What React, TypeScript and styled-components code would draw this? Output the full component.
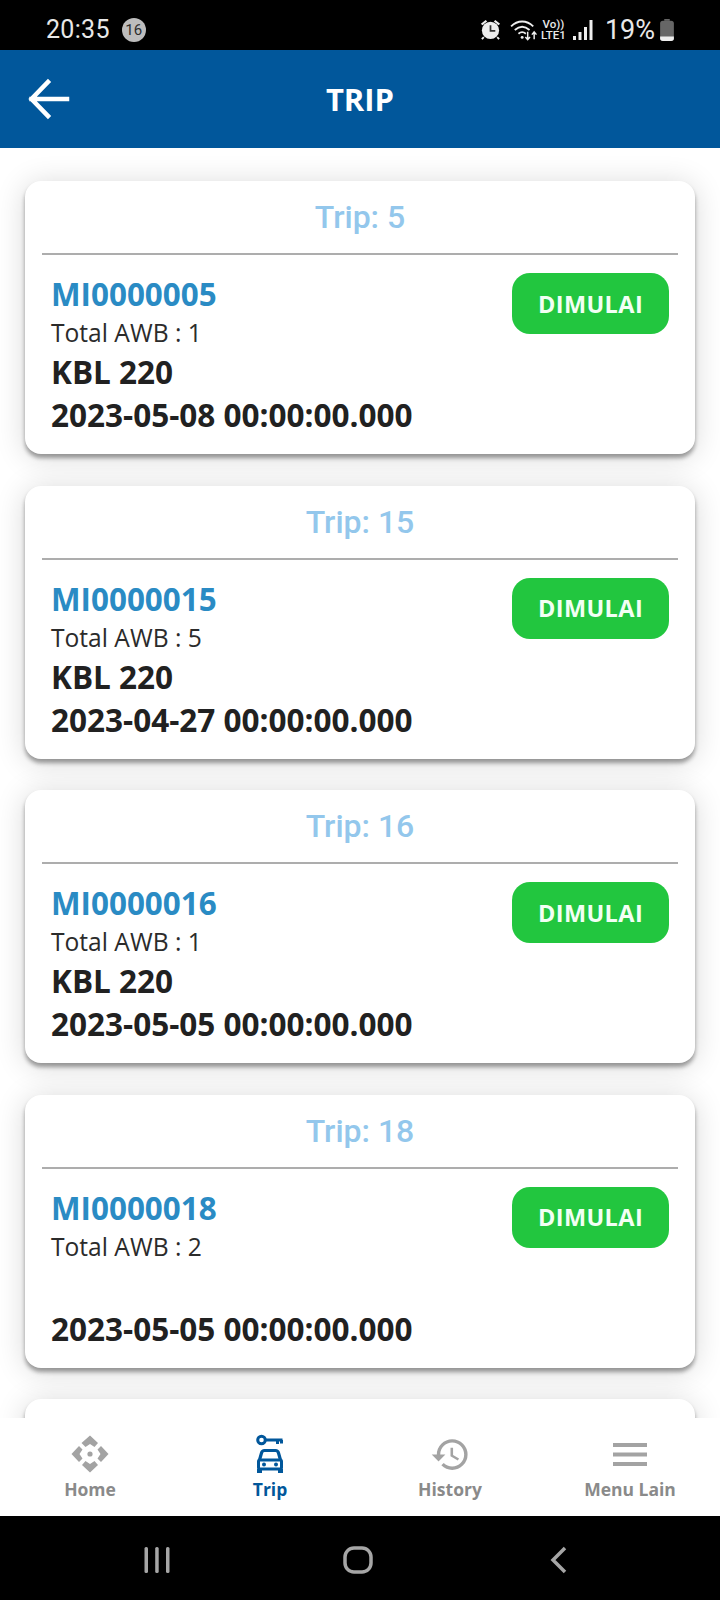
import React from 'react';
import styled, { createGlobalStyle } from 'styled-components';
import { MdHistory } from 'react-icons/md';

type Trip = {
    trip: number,
    code: string,
    awb: number,
    vehicle: string,
    date: string,
}

const trips: Trip[] = [
    { trip: 5, code: 'MI0000005', awb: 1, vehicle: 'KBL 220', date: '2023-05-08 00:00:00.000' },
    { trip: 15, code: 'MI0000015', awb: 5, vehicle: 'KBL 220', date: '2023-04-27 00:00:00.000' },
    { trip: 16, code: 'MI0000016', awb: 1, vehicle: 'KBL 220', date: '2023-05-05 00:00:00.000' },
    { trip: 18, code: 'MI0000018', awb: 2, vehicle: '', date: '2023-05-05 00:00:00.000' },
];

const GlobalStyle = createGlobalStyle`
  html, body {
    margin: 0;
    padding: 0;
    background: #fff;
  }
`

const Screen = styled.div`
  width: 720px;
  height: 1600px;
  display: flex;
  flex-direction: column;
  overflow: hidden;
  font-family: "Open Sans", "Liberation Sans", sans-serif;
  background: #fff;
`

const StatusBar = styled.div`
  height: 50px;
  flex: none;
  box-sizing: border-box;
  background: #000;
  color: #e8e8e8;
  display: flex;
  align-items: center;
  justify-content: space-between;
  padding: 9px 46px 0 46px;
`

const StatusGroup = styled.div`
  display: flex;
  align-items: center;
`

const Clock = styled.span`
  font-family: Roboto, sans-serif;
  font-size: 25px;
  letter-spacing: 0.3px;
`

const Badge = styled.span`
  width: 24px;
  height: 24px;
  margin-left: 12px;
  border-radius: 50%;
  background: #bdbdbd;
  color: #2e2e2e;
  font-family: Roboto, sans-serif;
  font-size: 15px;
  display: flex;
  align-items: center;
  justify-content: center;
`

const Percent = styled.span`
  font-family: Roboto, sans-serif;
  font-size: 27px;
  margin: 0 5px 0 12px;
`

const Volte = styled.span`
  font-family: Roboto, sans-serif;
  font-size: 11.5px;
  font-weight: 500;
  line-height: 11px;
  text-align: center;
  margin: 0 7px 0 3px;
  display: flex;
  flex-direction: column;
`

const AlarmWrap = styled.span`
  display: flex;
  margin-right: 8px;
`

const Header = styled.header`
  height: 98px;
  flex: none;
  background: #01579b;
  display: flex;
  align-items: center;
  justify-content: center;
  position: relative;
`

const BackIcon = styled.svg`
  position: absolute;
  left: 28px;
  top: 28px;
`

const HeaderTitle = styled.h1`
  margin: 0;
  color: #fff;
  font-size: 31px;
  font-weight: 700;
`

const List = styled.main`
  flex: 1;
  min-height: 0;
  overflow: hidden;
  display: flex;
  flex-direction: column;
  gap: 31.5px;
  padding: 33px 25px 0;
  background: #fff;
`

const Card = styled.section`
  flex: none;
  height: 273px;
  box-sizing: border-box;
  padding: 0 17px;
  background: #fff;
  border-radius: 16px;
  box-shadow: 0 4px 4px rgba(0, 0, 0, 0.36), 0 3px 30px rgba(0, 0, 0, 0.16);
`

const CardTitle = styled.div`
  height: 72px;
  border-bottom: 2px solid #adadad;
  display: flex;
  align-items: center;
  justify-content: center;
  font-family: Roboto, sans-serif;
  font-size: 32px;
  font-weight: 500;
  color: #93c7ec;
`

const CardBody = styled.div`
  display: flex;
  justify-content: space-between;
  align-items: flex-start;
  padding: 18px 9px 0 9px;
`

const Info = styled.div`
  display: flex;
  flex-direction: column;
`

const Code = styled.div`
  font-size: 31.4px;
  line-height: 42px;
  font-weight: 700;
  color: #2a8bc4;
`

const Awb = styled.div`
  font-size: 24.6px;
  line-height: 35px;
  color: #2b2b2b;
`

const Strong = styled.div`
  font-size: 31.5px;
  line-height: 43px;
  min-height: 43px;
  font-weight: 700;
  color: #212121;
`

const StartButton = styled.button`
  width: 157px;
  height: 61px;
  border: 0;
  border-radius: 18px;
  background: #22c63f;
  color: #f2fff4;
  font-family: "Open Sans", sans-serif;
  font-size: 23.5px;
  font-weight: 700;
  letter-spacing: 0.4px;
`

const BottomNav = styled.nav`
  height: 98px;
  flex: none;
  position: relative;
  background: #fff;
  display: grid;
  grid-template-columns: repeat(4, 1fr);
`

const NavItem = styled.div<{ $active?: boolean }>`
  display: flex;
  flex-direction: column;
  align-items: center;
  padding-top: 16px;
  box-sizing: border-box;
  color: ${(p) => (p.$active ? '#01579b' : '#8a8a8a')};
  font-size: 17.5px;
  line-height: 26px;
  font-weight: 700;
`

const NavIconBox = styled.div<{ $active?: boolean }>`
  height: 40px;
  margin-bottom: 2px;
  display: flex;
  align-items: center;
  justify-content: center;
  color: ${(p) => (p.$active ? '#01579b' : '#a3a3a3')};
`

const SystemBar = styled.div`
  height: 84px;
  flex: none;
  box-sizing: border-box;
  background: #000;
  display: grid;
  grid-template-columns: repeat(3, 201px);
  padding: 4px 0 0 56px;
  align-items: center;
  justify-items: center;
`

const AlarmIcon = () => (
    <svg width="23" height="23" viewBox="0 0 24 24" fill="#eee">
        <circle cx="12" cy="13" r="9" />
        <path d="M2 6l5-4 1.5 1.6-5 4zM22 6l-5-4-1.5 1.6 5 4z" />
        <path d="M12 7.5v6h5" fill="none" stroke="#333" strokeWidth="1.8" />
        <path d="M5 20l-2 2M19 20l2 2" stroke="#eee" strokeWidth="2" />
    </svg>
);

const WifiIcon = () => (
    <svg width="28" height="24" viewBox="0 0 30 26" fill="none" stroke="#eee" strokeWidth="2">
        <path d="M1 9c7-7 17-7 24 0" />
        <path d="M5 13c5-4.5 11-4.5 16 0" />
        <path d="M9 17c3-2.5 5-2.5 8 0" />
        <circle cx="13" cy="21" r="1.6" fill="#eee" stroke="none" />
        <path d="M19 15v8M16.5 20.5l2.5 3 2.5-3M26 23v-8M23.5 18l2.5-3 2.5 3" strokeWidth="1.6" />
    </svg>
);

const SignalIcon = () => (
    <svg width="20" height="22" viewBox="0 0 20 22" fill="#eee">
        <rect x="0" y="17" width="3" height="4" />
        <rect x="5.5" y="13" width="3" height="8" />
        <rect x="11" y="8" width="3" height="13" />
        <rect x="16.5" y="1" width="3" height="20" />
    </svg>
);

const BatteryIcon = () => (
    <svg width="14" height="22" viewBox="0 0 15 24">
        <path d="M4.5 0h6v2h-6z" fill="#666" />
        <rect x="0" y="2" width="15" height="22" rx="3" fill="#666" />
        <path d="M0 19h15v2a3 3 0 0 1-3 3H3a3 3 0 0 1-3-3z" fill="#eee" />
    </svg>
);

const HomeIcon = () => (
    <svg width="38" height="38" viewBox="0 0 38 38" fill="currentColor">
        <path d="M19 0.5l8 7.5-3.5 4-4.500-3-4.500 3L10.500 8z" />
        <path d="M19 37.5l8-7.5-3.500-4-4.500 3-4.500-3-3.500 4z" />
        <path d="M0.500 19l7.500-8 3.500 3.500-3 4.500 3 4.500L8 27z" />
        <path d="M37.500 19l-7.500-8-3.500 3.500 3 4.500-3 4.500 3.500 3.500z" />
        <circle cx="19" cy="19" r="2.600" />
    </svg>
);

const TripIcon = () => (
    <svg width="28" height="40" viewBox="0 0 28 40" fill="none" stroke="currentColor">
        <circle cx="5.500" cy="6" r="3.800" strokeWidth="3" />
        <path d="M9 6h17.500M21.500 6v4M25.500 6v3.500" strokeWidth="3" />
        <path d="M3.500 26l2-7c.4-1.500 1.500-2.500 3-2.500h11c1.500 0 2.600 1 3 2.500l2 7" strokeWidth="3.200" />
        <rect x="2.500" y="26" width="23" height="9" rx="1.500" strokeWidth="3" />
        <path d="M1 35h5v4H1zM22 35h5v4h-5z" fill="currentColor" stroke="none" />
        <circle cx="8" cy="30.500" r="2" fill="currentColor" stroke="none" />
        <circle cx="20" cy="30.500" r="2" fill="currentColor" stroke="none" />
    </svg>
);

const MenuIcon = () => (
    <svg width="34" height="23" viewBox="0 0 34 23" fill="currentColor">
        <rect y="0" width="34" height="4" />
        <rect y="9.500" width="34" height="4" />
        <rect y="19" width="34" height="4" />
    </svg>
);

const App: React.FC = () => {
    return (
        <Screen>
            <GlobalStyle />
            <StatusBar>
                <StatusGroup>
                    <Clock>20:35</Clock>
                    <Badge>16</Badge>
                </StatusGroup>
                <StatusGroup>
                    <AlarmWrap><AlarmIcon /></AlarmWrap>
                    <WifiIcon />
                    <Volte><span>Vo))</span><span>LTE1</span></Volte>
                    <SignalIcon />
                    <Percent>19%</Percent>
                    <BatteryIcon />
                </StatusGroup>
            </StatusBar>
            <Header>
                <BackIcon width="42" height="42" viewBox="0 0 42 42" fill="none" stroke="#fff" strokeWidth="4.500" strokeLinecap="square">
                    <path d="M3.500 21H39M20 4L3.500 21 20 38" />
                </BackIcon>
                <HeaderTitle>TRIP</HeaderTitle>
            </Header>
            <List>
                {trips.map((t) => (
                    <Card key={t.trip}>
                        <CardTitle>Trip: {t.trip}</CardTitle>
                        <CardBody>
                            <Info>
                                <Code>{t.code}</Code>
                                <Awb>Total AWB : {t.awb}</Awb>
                                <Strong>{t.vehicle}</Strong>
                                <Strong>{t.date}</Strong>
                            </Info>
                            <StartButton>DIMULAI</StartButton>
                        </CardBody>
                    </Card>
                ))}
                <Card />
            </List>
            <BottomNav>
                <NavItem>
                    <NavIconBox><HomeIcon /></NavIconBox>
                    Home
                </NavItem>
                <NavItem $active>
                    <NavIconBox $active><TripIcon /></NavIconBox>
                    Trip
                </NavItem>
                <NavItem>
                    <NavIconBox><MdHistory size={41} /></NavIconBox>
                    History
                </NavItem>
                <NavItem>
                    <NavIconBox><MenuIcon /></NavIconBox>
                    Menu Lain
                </NavItem>
            </BottomNav>
            <SystemBar>
                <svg width="26" height="26" viewBox="0 0 26 26" fill="#a6a6a6">
                    <rect x="0.500" y="0" width="3.500" height="26" rx="1.500" />
                    <rect x="11.200" y="0" width="3.500" height="26" rx="1.500" />
                    <rect x="22" y="0" width="3.500" height="26" rx="1.500" />
                </svg>
                <svg width="30" height="28" viewBox="0 0 30 28" fill="none" stroke="#a6a6a6" strokeWidth="3.500">
                    <rect x="2" y="2" width="26" height="24" rx="9" />
                </svg>
                <svg width="18" height="28" viewBox="0 0 18 28" fill="none" stroke="#a6a6a6" strokeWidth="3.500">
                    <path d="M15 2L3 14l12 12" />
                </svg>
            </SystemBar>
        </Screen>
    )
}

export default App;
